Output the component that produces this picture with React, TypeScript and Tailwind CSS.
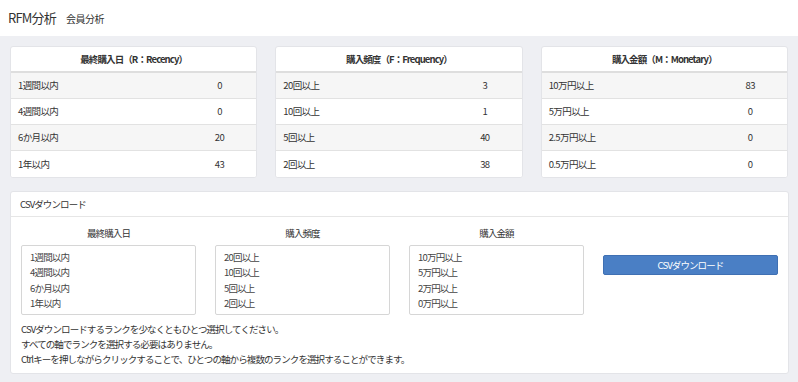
import React from "react";

const font = { fontFamily: '"Noto Sans CJK JP", "Noto Sans", sans-serif' };

type Row = [string, string];

function RankCard({ title, rows }: { title: string; rows: Row[] }) {
  return (
    <div className="bg-white rounded-[3px] border border-[#e3e4e8] overflow-hidden">
      <div className="h-[26px] flex items-center justify-center text-[9.5px] tracking-[-0.9px] font-bold text-[#333] border-b-2 border-[#dedede]">
        {title}
      </div>
      {rows.map((r, i) => (
        <div
          key={i}
          className={`h-[26px] grid grid-cols-[7fr_3fr] items-center text-[9.5px] tracking-[-0.6px] text-[#333] ${
            i < rows.length - 1 ? "border-b border-[#e2e2e2]" : ""
          } ${i % 2 === 0 ? "bg-[#f6f6f6]" : "bg-white"}`}
        >
          <div className="pl-[7px]">{r[0]}</div>
          <div className="text-center">{r[1]}</div>
        </div>
      ))}
    </div>
  );
}

function SelectBox({ label, items }: { label: string; items: string[] }) {
  return (
    <div className="flex flex-col">
      <div className="h-[23px] flex items-center justify-center text-[9.5px] tracking-[-0.9px] text-[#333]">{label}</div>
      <div className="h-[70px] border border-[#d6d6d6] rounded-[2px] bg-white px-[8px] pt-[4px] text-[9.5px] tracking-[-0.8px] text-[#444] leading-[15.3px]">
        {items.map((t) => (
          <div key={t}>{t}</div>
        ))}
      </div>
    </div>
  );
}

export default function App() {
  return (
    <div className="w-[798px] h-[382px] bg-[#eeeff3] overflow-hidden" style={font}>
      <div className="h-[36px] bg-white flex items-center pl-[8px] gap-[10px] text-[#333]">
        <span className="text-[13px] tracking-[-0.8px]">RFM分析</span>
        <span className="text-[10px] tracking-[-0.5px]">会員分析</span>
      </div>
      <div className="px-[10px] pt-[10px]">
        <div className="grid grid-cols-3 gap-[18px]">
          <RankCard
            title="最終購入日（R：Recency）"
            rows={[
              ["1週間以内", "0"],
              ["4週間以内", "0"],
              ["6か月以内", "20"],
              ["1年以内", "43"],
            ]}
          />
          <RankCard
            title="購入頻度（F：Frequency）"
            rows={[
              ["20回以上", "3"],
              ["10回以上", "1"],
              ["5回以上", "40"],
              ["2回以上", "38"],
            ]}
          />
          <RankCard
            title="購入金額（M：Monetary）"
            rows={[
              ["10万円以上", "83"],
              ["5万円以上", "0"],
              ["2.5万円以上", "0"],
              ["0.5万円以上", "0"],
            ]}
          />
        </div>
        <div className="mt-[13px] w-[779px] bg-white rounded-[3px] border border-[#e3e4e8]">
          <div className="h-[25px] flex items-center pl-[9px] text-[9.5px] tracking-[-0.9px] text-[#333] border-b border-[#e6e6e6]">
            CSVダウンロード
          </div>
          <div className="px-[10px] pt-[5px]">
            <div className="grid grid-cols-4 gap-[19px]">
              <SelectBox label="最終購入日" items={["1週間以内", "4週間以内", "6か月以内", "1年以内"]} />
              <SelectBox label="購入頻度" items={["20回以上", "10回以上", "5回以上", "2回以上"]} />
              <SelectBox label="購入金額" items={["10万円以上", "5万円以上", "2万円以上", "0万円以上"]} />
              <div className="pt-[33px]">
                <button className="w-full h-[20px] bg-[#4a7fc5] border border-[#3f70b3] rounded-[2px] text-white text-[9.5px] tracking-[-0.9px] flex items-center justify-center">
                  CSVダウンロード
                </button>
              </div>
            </div>
            <div className="pt-[7px] pb-[6px] text-[9.5px] tracking-[-0.9px] text-[#333] leading-[15px]">
              <div>CSVダウンロードするランクを少なくともひとつ選択してください。</div>
              <div>すべての軸でランクを選択する必要はありません。</div>
              <div>Ctrlキーを押しながらクリックすることで、ひとつの軸から複数のランクを選択することができます。</div>
            </div>
          </div>
        </div>
      </div>
    </div>
  );
}
